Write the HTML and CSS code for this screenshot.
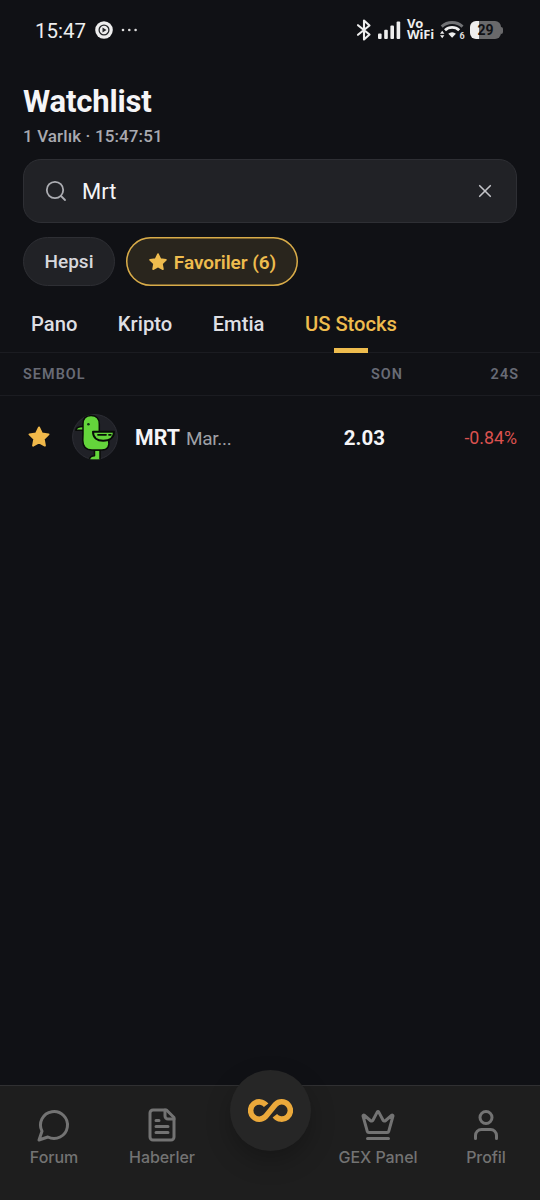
FILE: index.html
```html
<!DOCTYPE html>
<html lang="tr">
<head>
<meta charset="utf-8">
<title>Watchlist</title>
<link rel="stylesheet" href="styles.css">
</head>
<body>
<div class="screen">
  <div class="status">
    <span class="clock">15:47</span>
    <svg class="play" width="18" height="18" viewBox="0 0 18 18"><circle cx="9" cy="9" r="8.8" fill="#eee"/><circle cx="9" cy="9" r="4.9" fill="none" stroke="#25272a" stroke-width="1.3"/><path d="M7.5 6.6v4.8l4-2.4z" fill="#25272a"/></svg>
    <svg class="more" width="17" height="4" viewBox="0 0 17 4" fill="#ddd"><circle cx="2" cy="2" r="1.3"/><circle cx="8.3" cy="2" r="1.3"/><circle cx="14.6" cy="2" r="1.3"/></svg>
    <div class="system">
      <svg width="16" height="22" viewBox="0 0 16 22" fill="none" stroke="#eee" stroke-width="2.1" stroke-linejoin="round" stroke-linecap="round"><path d="M2 6.2l11.5 9.3L8 20.5v-19l5.5 5L2 15.8"/></svg>
      <svg class="signal" width="23" height="18" viewBox="0 0 23 18" fill="#eee"><rect x="0" y="12.5" width="3.6" height="5.5" rx="1"/><rect x="6.2" y="8.8" width="3.6" height="9.2" rx="1"/><rect x="12.4" y="4.6" width="3.6" height="13.4" rx="1"/><rect x="18.6" y="0.5" width="3.6" height="17.5" rx="1"/></svg>
      <span class="vowifi">Vo<br>WiFi</span>
      <svg class="wifi" width="25" height="20" viewBox="0 0 25 20"><path d="M1.7 6.600a15.500 15.500 0 0 1 20.800 0" fill="none" stroke="#717275" stroke-width="3"/><path d="M5 10.200a10.500 10.500 0 0 1 14.200 0" fill="none" stroke="#eee" stroke-width="2.800"/><path d="M8.300 13.700a5.500 5.500 0 0 1 7.600 0l-3.800 4z" fill="#eee"/><path d="M0 13.800l2.200-3 2.200 3zM0 15.200l2.200 3 2.200-3z" fill="#eee"/><text x="19.400" y="19" class="wifi-gen">6</text></svg>
      <span class="battery"><span class="cell">29</span><i class="tip"></i></span>
    </div>
  </div>

  <header class="head">
    <h1>Watchlist</h1>
    <p>1 Varlık · 15:47:51</p>
  </header>

  <div class="search">
    <svg width="22" height="22" viewBox="0 0 22 22" fill="none" stroke="#acadb2" stroke-width="1.8" stroke-linecap="round"><circle cx="10" cy="10" r="8.2"/><path d="M16 16l4 4"/></svg>
    <span class="query">Mrt</span>
    <svg width="14" height="14" viewBox="0 0 14 14" fill="none" stroke="#c3c4c8" stroke-width="1.6" stroke-linecap="round"><path d="M1.700 1.700l10.600 10.600M12.300 1.700L1.700 12.300"/></svg>
  </div>

  <div class="chips">
    <span class="chip all">Hepsi</span>
    <span class="chip fav"><svg width="20" height="20" viewBox="0 0 24 24"><path d="M12 2.500l2.900 6 6.600.9-4.800 4.600 1.200 6.600-5.900-3.200-5.900 3.200 1.200-6.600L2.500 9.400l6.600-.9z" fill="#eebc4e" stroke="#eebc4e" stroke-width="2" stroke-linejoin="round"/></svg><span>Favoriler (6)</span></span>
  </div>

  <nav class="tabs">
    <span class="tab">Pano</span><span class="tab">Kripto</span><span class="tab">Emtia</span><span class="tab active">US Stocks</span>
  </nav>

  <div class="columns"><span class="c-symbol">SEMBOL</span><span class="c-last">SON</span><span class="c-day">24S</span></div>

  <main class="list">
    <div class="row">
      <svg class="star" width="24" height="24" viewBox="0 0 24 24"><path d="M12 2.500l2.900 6 6.600.9-4.800 4.600 1.200 6.600-5.900-3.200-5.900 3.200 1.200-6.600L2.500 9.400l6.600-.9z" fill="#f0b84a" stroke="#f0b84a" stroke-width="2" stroke-linejoin="round"/></svg>
      <svg class="logo" width="46" height="46" viewBox="0 0 46 46">
        <defs><clipPath id="disc"><circle cx="23" cy="23" r="22.8"/></clipPath></defs>
        <circle cx="23" cy="23" r="22.400" fill="#202127" stroke="#2d2e35"/>
        <g clip-path="url(#disc)" stroke="#080b08" stroke-width="1.5" stroke-linejoin="round">
          <path d="M22.500 36H28v10H17c.8-2.800 2.600-4.200 5.500-4.200z" fill="#64d53b"/>
          <path d="M12 16.200H3.800c.5-2.400 3.200-3.800 8.200-3.600z" fill="#64d53b"/>
          <path d="M11 10c0-5.400 3-8.500 8-8.500s8.300 3.200 8.300 8.500v8H40c0 4-1 6.800-3.500 8.300C38 32 35.500 36 30 36H20c-6 0-9.200-3.500-9.200-9.500 0-3 .2-5 .2-7z" fill="#64d53b"/>
          <path d="M21 17.700h21c0 5.500-4 9-10.800 9-6.200 0-10.200-3.200-10.200-9z" fill="#64d53b" stroke-width="2"/>
          <path d="M26 20.800h8M37 20.800h1.800" fill="none" stroke-width="1.8" stroke-linecap="round"/>
        </g>
        <circle cx="16.400" cy="10.300" r="1.300" fill="#123016"/>
      </svg>
      <div class="name"><b>MRT</b><span>Mar...</span></div>
      <span class="price">2.03</span>
      <span class="change">-0.84%</span>
    </div>
  </main>

  <footer class="bottom">
    <div class="item"><svg width="36" height="36" viewBox="0 0 24 24"><path d="M7.900 20A9 9 0 1 0 4 16.100L2 22Z"/></svg><span>Forum</span></div>
    <div class="item"><svg width="36" height="36" viewBox="0 0 24 24"><path d="M15 2H6a2 2 0 0 0-2 2v16a2 2 0 0 0 2 2h12a2 2 0 0 0 2-2V7Z"/><path d="M14 2v4a2 2 0 0 0 2 2h4M10 9H8M16 13H8M16 17H8"/></svg><span>Haberler</span></div>
    <div class="item center"><div class="orb"><svg width="45" height="25" viewBox="0 0 46 26"><path d="M18.500 7.600A9 9 0 1 0 17.800 19.300L28.200 6.700A9 9 0 1 1 27.500 18.400" fill="none" stroke="#eba93b" stroke-width="5.800"/></svg></div></div>
    <div class="item"><svg width="36" height="36" viewBox="0 0 24 24"><path d="M11.562 3.266a.5.5 0 0 1 .876 0L15.390 8.870a1 1 0 0 0 1.516.294L21.183 5.500a.5.5 0 0 1 .798.519l-2.834 10.246a1 1 0 0 1-.956.734H5.810a1 1 0 0 1-.957-.734L2.020 6.020a.5.5 0 0 1 .798-.519l4.276 3.664a1 1 0 0 0 1.516-.294zM5 21h14"/></svg><span>GEX Panel</span></div>
    <div class="item"><svg width="36" height="36" viewBox="0 0 24 24"><path d="M19 21v-2a4 4 0 0 0-4-4H9a4 4 0 0 0-4 4v2"/><circle cx="12" cy="7" r="4"/></svg><span>Profil</span></div>
  </footer>
</div>
</body>
</html>
```
FILE: styles.css
```css
* { box-sizing: border-box; }
body { margin: 0; background: #101115; font-family: Roboto, sans-serif; color: #f5f5f7; }
.screen { width: 540px; height: 1200px; display: flex; flex-direction: column; overflow: hidden; }

.status { height: 60px; padding: 0 37px 0 35px; display: flex; align-items: center; color: #eee; }
.clock { font-size: 20.5px; line-height: 24px; width: 60px; padding-top: 1px; }
.more { margin-left: 8px; }
.system { margin-left: auto; display: flex; align-items: center; }
.signal { margin-left: 6px; }
.vowifi { margin: 0 0 2px 6px; width: 27px; font: 700 13px/11px "Open Sans", sans-serif; letter-spacing: -.1px; }
.wifi { margin-left: 6px; }
.wifi-gen { font: 700 9px Roboto, sans-serif; fill: #ddd; }
.battery { display: flex; align-items: center; margin-left: 5px; }
.cell { width: 31px; height: 18px; border-radius: 6px; background: linear-gradient(90deg, #eee 30%, #69696b 30%); color: #101115; font-weight: 700; font-size: 14px; line-height: 18px; text-align: center; }
.tip { width: 2px; height: 7px; background: #69696b; border-radius: 0 2px 2px 0; }

.head { padding: 24px 23px 0; height: 99px; }
h1 { margin: 0; font-size: 31px; line-height: 36px; font-weight: 700; letter-spacing: -0.15px; }
p { margin: 6px 0 0; font-size: 17px; line-height: 20px; font-weight: 500; letter-spacing: .12px; color: #a9aab0; }

.search { height: 64px; margin: 0 23px; padding: 0 24px 0 21px; display: flex; align-items: center; border: 1px solid #2e2f34; border-radius: 18px; background: #212226; }
.query { flex: 1; padding: 2px 0 0 15px; font-size: 22px; line-height: 26px; }

.chips { display: flex; gap: 11px; padding: 14px 23px 0; }
.chip { height: 49px; border-radius: 25px; display: flex; align-items: center; justify-content: center; font-size: 19px; line-height: 22px; font-weight: 500; }
.all { width: 92px; padding-top: 1px; background: #212226; border: 1px solid #2e2f34; color: #d7d8dd; }
.fav { width: 172px; gap: 6px; background: #29251d; box-shadow: inset 0 0 0 1.5px #d9ac49; color: #eebc4e; font-weight: 600; letter-spacing: -.05px; }
.fav span { padding-top: 2px; }

.tabs { height: 67px; padding: 0 31px; display: flex; gap: 40.5px; border-bottom: 1px solid #1b1c21; }
.tab { position: relative; padding-top: 26px; font-size: 20.2px; line-height: 24px; font-weight: 550; color: #dedfe3; }
.active { color: #eebc4e; }
.active::after { content: ""; position: absolute; left: 50%; bottom: -1px; width: 34px; height: 5px; margin-left: -17px; background: #eebc4e; }

.columns { height: 43px; padding: 1px 21px 0 23px; display: grid; grid-template-columns: 1fr 120px 116px; align-items: center; font-size: 14.4px; font-weight: 600; letter-spacing: 1.05px; color: #686b75; border-bottom: 1px solid #1b1c21; }
.c-last, .c-day { text-align: right; }

.list { flex: 1; }
.row { height: 82px; padding: 0 23px 0 27px; display: flex; align-items: center; }
.logo { margin-left: 21px; }
.name { width: 140px; margin-left: 17px; padding-top: 1px; display: flex; align-items: baseline; gap: 6px; }
.name b { font-size: 21.3px; font-weight: 700; }
.name span { font-size: 19px; letter-spacing: -.25px; color: #9fa0a6; }
.price { width: 110px; padding-top: 1px; text-align: right; font-size: 20.5px; font-weight: 700; }
.change { flex: 1; padding-top: 1px; text-align: right; font-size: 17.8px; font-weight: 450; color: #dc524f; }

.bottom { height: 115px; display: grid; grid-template-columns: repeat(5, 108px); background: #1e1e1e; border-top: 1px solid #303032; font-family: Inter, sans-serif; }
.item { display: flex; flex-direction: column; align-items: center; padding-top: 21px; color: #737373; font-size: 16px; line-height: 20px; font-weight: 550; letter-spacing: -.05px; gap: 4px; white-space: nowrap; }
.item > svg { fill: none; stroke: #737373; stroke-width: 2; stroke-linecap: round; stroke-linejoin: round; }
.center { padding: 0; }
.orb { width: 81px; height: 81px; margin-top: -16px; flex-shrink: 0; border-radius: 50%; display: flex; align-items: center; justify-content: center; background: #262626; box-shadow: 0 10px 24px rgba(0, 0, 0, .25); }
```
